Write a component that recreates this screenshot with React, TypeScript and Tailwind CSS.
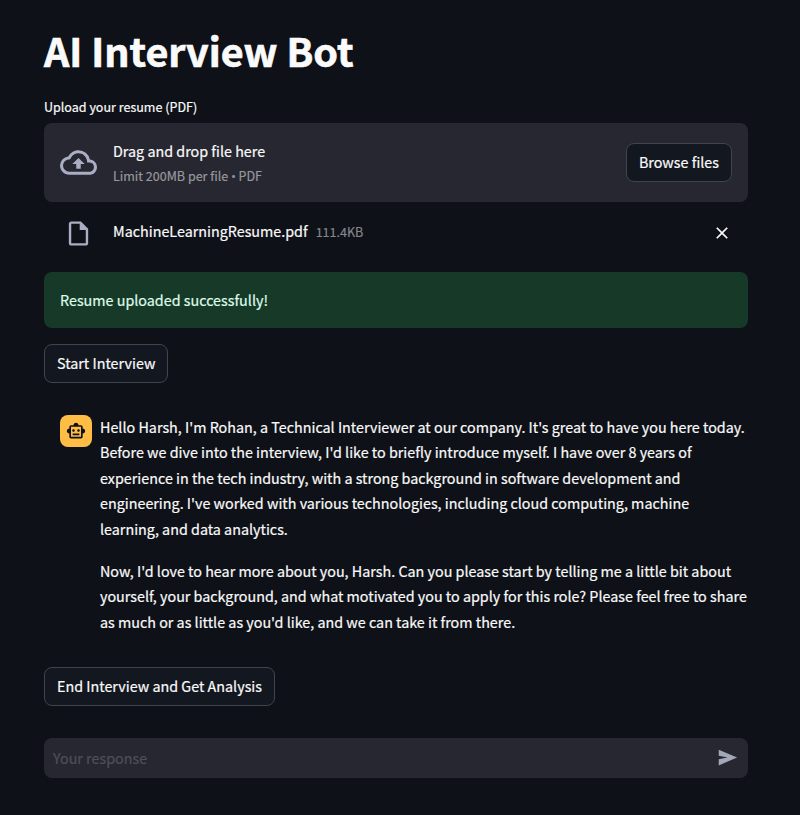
import type { ReactNode } from "react";
import {
  MdClose,
  MdOutlineCloudUpload,
  MdOutlineInsertDriveFile,
  MdOutlineSmartToy,
} from "react-icons/md";

const introLines = [
  "Hello Harsh, I'm Rohan, a Technical Interviewer at our company. It's great to have you here today.",
  "Before we dive into the interview, I'd like to briefly introduce myself. I have over 8 years of",
  "experience in the tech industry, with a strong background in software development and",
  "engineering. I've worked with various technologies, including cloud computing, machine",
  "learning, and data analytics.",
];

const questionLines = [
  "Now, I'd love to hear more about you, Harsh. Can you please start by telling me a little bit about",
  "yourself, your background, and what motivated you to apply for this role? Please feel free to share",
  "as much or as little as you'd like, and we can take it from there.",
];

function Button({ children }: { children: ReactNode }) {
  return (
    <button className="flex h-[39px] shrink-0 items-center rounded-lg border border-[#41444c] bg-[#131720] px-3 pb-px leading-6 whitespace-nowrap">
      {children}
    </button>
  );
}

function SendIcon() {
  return (
    <svg viewBox="0 0 24 24" className="size-[21px] fill-[#a3a8b8]">
      <path d="M2 3L23 12L2 21V14L12 12L2 10Z" />
    </svg>
  );
}

function Paragraph({ lines }: { lines: string[] }) {
  return (
    <p className="leading-[25.6px] whitespace-nowrap">
      {lines.map((line) => (
        <span key={line} className="block">
          {line}
        </span>
      ))}
    </p>
  );
}

export default function App() {
  return (
    <div className="flex h-[815px] w-full flex-col items-start overflow-hidden bg-[#0e1117] pr-[52px] pl-11 font-['Noto_Sans_CJK_SC','Source_Sans_Pro',sans-serif] text-[14.33px] font-normal text-[#fafafa] [-webkit-text-stroke:0.2px]">
      <h1 className="mt-[23px] h-[53px] text-[39.45px] leading-[53px] font-bold whitespace-nowrap [-webkit-text-stroke:0.7px]">
        AI Interview Bot
      </h1>

      <label className="mt-5 h-[27px] text-[12.54px] leading-[21px] whitespace-nowrap">
        Upload your resume (PDF)
      </label>
      <section className="flex h-[79px] w-full items-center rounded-lg bg-[#262730] px-4">
        <MdOutlineCloudUpload className="mr-4 size-[37px] text-[#a9aec2]" />
        <div className="flex flex-1 flex-col pt-0.5">
          <span className="leading-[25px]">Drag and drop file here</span>
          <span className="pt-px text-[12.54px] leading-6 text-[#97989c]">
            Limit 200MB per file <span className="font-['Open_Sans'] text-[12px]">•</span> PDF
          </span>
        </div>
        <Button>Browse files</Button>
      </section>

      <div className="flex h-[70px] w-full items-center px-4 pb-2">
        <div className="mr-4 flex w-[37px] justify-center">
          <MdOutlineInsertDriveFile className="size-[29px] text-[#a9aec2]" />
        </div>
        <span className="mr-2 pb-[5px] leading-6">MachineLearningResume.pdf</span>
        <span className="flex-1 pb-[3px] text-[12.54px] leading-6 text-[#84868b]">111.4KB</span>
        <MdClose className="size-5" />
      </div>

      <div className="flex h-14 w-full items-center rounded-lg bg-[#173928] px-4 text-[#dffde9]">
        Resume uploaded successfully!
      </div>

      <div className="mt-4">
        <Button>Start Interview</Button>
      </div>

      <div className="mt-4 flex w-full gap-2 p-4">
        <div className="flex size-8 shrink-0 items-center justify-center rounded-lg bg-[#ffbd45]">
          <MdOutlineSmartToy className="size-5 text-[#0e1117]" />
        </div>
        <div className="-mt-[1.3px] flex flex-col gap-4">
          <Paragraph lines={introLines} />
          <Paragraph lines={questionLines} />
        </div>
      </div>

      <div className="mt-[16.3px]">
        <Button>End Interview and Get Analysis</Button>
      </div>

      <div className="mt-8 flex h-10 w-full items-center justify-between rounded-lg bg-[#262730] pr-[10px] pl-[9px] text-[#4d4f5c]">
        <span>Your response</span>
        <SendIcon />
      </div>
    </div>
  );
}
